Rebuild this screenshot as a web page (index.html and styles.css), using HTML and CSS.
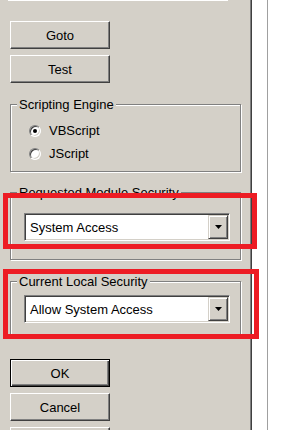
FILE: index.html
```html
<!DOCTYPE html>
<html>
<head>
  <title>Module Properties</title>
  <link rel="stylesheet" href="styles.css">
</head>
<body>
  <div class="screen">
    <div class="panel">
      <div class="top-edge"></div>
      <button class="btn btn-goto">Goto</button>
      <button class="btn">Test</button>

      <div class="group group-engine">
        <div class="legend">Scripting Engine</div>
        <div class="radios">
          <div class="radio-row"><span class="radio checked"></span>VBScript</div>
          <div class="radio-row"><span class="radio"></span>JScript</div>
        </div>
      </div>

      <div class="group group-req">
        <div class="legend">Requested Module Security</div>
        <div class="combo">
          <span class="combo-text">System Access</span>
          <span class="combo-drop">
            <svg width="7" height="4" viewBox="0 0 7 4"><path d="M0 0h7L3.5 4z" fill="#000"/></svg>
          </span>
        </div>
      </div>

      <div class="group group-cur">
        <div class="legend">Current Local Security</div>
        <div class="combo">
          <span class="combo-text">Allow System Access</span>
          <span class="combo-drop">
            <svg width="7" height="4" viewBox="0 0 7 4"><path d="M0 0h7L3.5 4z" fill="#000"/></svg>
          </span>
        </div>
      </div>

      <button class="btn btn-ok default">OK</button>
      <button class="btn">Cancel</button>
      <button class="btn"></button>
    </div>
    <div class="rule"></div>

    <!-- red highlight boxes drawn over the dialog -->
    <div class="mark mark-req"></div>
    <div class="mark mark-cur"></div>
  </div>
</body>
</html>
```

FILE: styles.css
```css
body {
  margin: 0;
  background: #fff;
  font-family: "Liberation Sans", Arial, sans-serif;
  font-size: 13px;
  color: #000;
}
.screen {
  position: relative;
  display: flex;
  height: 430px;
  overflow: hidden;
}
.panel {
  flex: none;
  width: 252px;
  box-sizing: border-box;
  padding-left: 10px;
  background: #d4d0c8;
  border-right: 1px solid #404040;
  box-shadow: inset -1px 0 #808080;
  overflow: hidden;
}
.rule {
  flex: none;
  width: 1px;
  margin-left: 15px;
  background: #a0a0a0;
}
.top-edge {
  width: 220px;
  height: 1px;
  margin-left: -2px;
  background: #fff;
}

/* buttons */
.btn {
  display: block;
  width: 100px;
  height: 28px;
  margin-top: 6px;
  padding: 0;
  box-sizing: border-box;
  background: #d4d0c8;
  border: 1px solid;
  border-color: #fff #404040 #404040 #fff;
  box-shadow: inset -1px -1px #808080;
  font-family: "Liberation Sans", Arial, sans-serif;
  font-size: 13px;
  color: #000;
}
.btn-goto {
  margin-top: 20px;
}
.btn-ok {
  margin-top: 22px;
}
.btn.default {
  border-color: #000;
  box-shadow: inset 1px 1px #fff, inset -1px -1px #404040, inset -2px -2px #808080;
}

/* group boxes */
.group {
  width: 231px;
  box-sizing: border-box;
  border: 1px solid #808080;
  box-shadow: 1px 1px 0 #fff, inset 1px 1px 0 #fff;
}
.legend {
  width: fit-content;
  margin: -8px 0 0 6px;
  padding: 0 2px;
  line-height: 15px;
  background: #d4d0c8;
}
.group-engine {
  margin-top: 21px;
  padding-bottom: 6px;
}
.group-req {
  margin-top: 20px;
  padding-bottom: 18px;
}
.group-req .combo {
  margin-top: 13px;
}
.group-cur {
  margin-top: 21px;
  padding-bottom: 13px;
}
.group-cur .combo {
  margin-top: 6px;
}

/* radios */
.radios {
  margin-top: 7px;
  padding-left: 18px;
}
.radio-row {
  display: flex;
  align-items: center;
  height: 23px;
}
.radio {
  position: relative;
  width: 12px;
  height: 12px;
  margin-right: 8px;
  box-sizing: border-box;
  border-radius: 50%;
  background: #fff;
  border: 1px solid;
  border-color: #808080 #fff #fff #808080;
  box-shadow: inset 1px 1px #404040, inset -1px -1px #d4d0c8;
}
.radio.checked::after {
  content: "";
  position: absolute;
  left: 3px;
  top: 3px;
  width: 4px;
  height: 4px;
  border-radius: 50%;
  background: #000;
}

/* combo boxes */
.combo {
  display: flex;
  width: 206px;
  height: 28px;
  margin-left: 13px;
  box-sizing: border-box;
  background: #fff;
  border: 1px solid;
  border-color: #808080 #fff #fff #808080;
  box-shadow: inset 1px 1px #404040, inset -1px -1px #d4d0c8;
  padding: 1px;
}
.combo-text {
  flex: 1;
  display: flex;
  align-items: center;
  padding-left: 4px;
}
.combo-drop {
  display: flex;
  align-items: center;
  justify-content: center;
  width: 20px;
  box-sizing: border-box;
  background: #d4d0c8;
  border: 1px solid;
  border-color: #d4d0c8 #404040 #404040 #d4d0c8;
  box-shadow: inset 1px 1px #fff, inset -1px -1px #808080;
}

/* red highlight rectangles */
.mark {
  position: absolute;
  left: 3px;
  box-sizing: border-box;
  border: 5px solid #ed1c24;
}
.mark-req {
  top: 193px;
  width: 254px;
  height: 56px;
}
.mark-cur {
  top: 269px;
  width: 256px;
  height: 70px;
}
```
